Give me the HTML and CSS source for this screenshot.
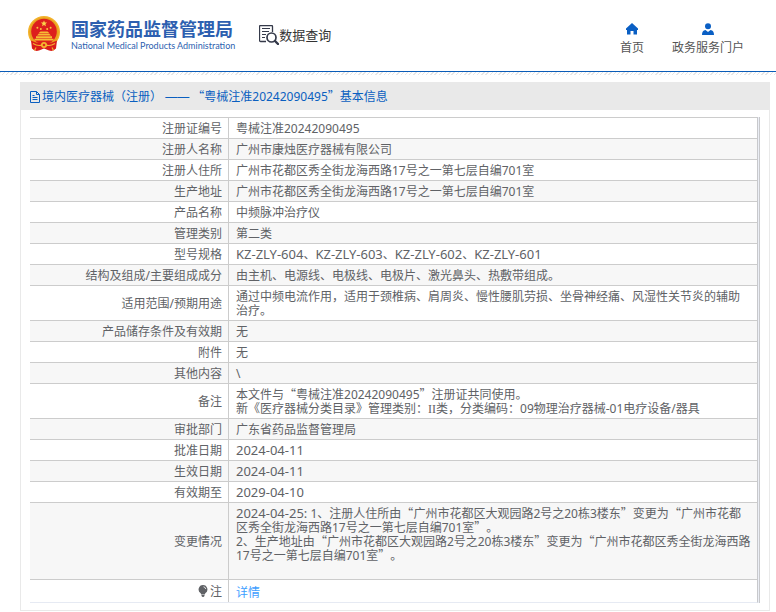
FILE: index.html
```html
<!DOCTYPE html>
<html lang="zh-CN">
<head>
<meta charset="utf-8">
<title>国家药品监督管理局 数据查询</title>
<link rel="stylesheet" href="styles.css">
</head>
<body>
<header class="top">
  <a class="brand" href="#">
    <svg class="emblem" viewBox="0 0 32 36" aria-hidden="true">
      <circle cx="16" cy="16" r="16" fill="#f3b32c"/>
      <circle cx="16" cy="16" r="14.6" fill="#e9a21f"/>
      <circle cx="16" cy="15.5" r="12.8" fill="#dd1f1d"/>
      <path d="M16 4.400l.9 2 2.200.2-1.700 1.400.5 2.200-1.900-1.200-1.900 1.200.5-2.200-1.700-1.400 2.200-.2z" fill="#fbd34a"/>
      <g fill="#f8c53e"><circle cx="9.400" cy="11.800" r="1"/><circle cx="12.800" cy="13" r="1"/><circle cx="19.200" cy="13" r="1"/><circle cx="22.600" cy="11.800" r="1"/></g>
      <path d="M10.500 17.200l2-1.700h7l2 1.700zM9 19.600l1.800-1.800h10.400l1.800 1.800zM8 20.200h16v2H8zM6.500 22.800h19v1.800h-19z" fill="#f6bd35"/>
      <path d="M3 24.500q5 2.500 10 2.500q3-1.500 6 0q5 0 10-2.500l-1 8q-3 3.500-7 2l-5-2-5 2q-4 1.500-7-2z" fill="#d91c1b"/>
      <path d="M5 27.500q5 3 9 1.500M27 27.500q-5 3-9 1.500M8 31.500l-1.500 3M24 31.500l1.500 3" fill="none" stroke="#f4b431" stroke-width="1.200"/>
      <circle cx="16" cy="29" r="3" fill="#f5b92f"/><circle cx="16" cy="29" r="1.300" fill="#dd2a1d"/>
    </svg>
    <span class="names"><strong class="name">国家药品监督管理局</strong><span class="english">National Medical Products Administration</span></span>
  </a>
  <a class="query" href="#">
    <svg class="query-icon" viewBox="0 0 20 20" fill="none" stroke="#353a4a" aria-hidden="true">
      <path d="M7 16.500H1.500a1 1 0 0 1-1-1V1.500a1 1 0 0 1 1-1h11a1 1 0 0 1 1 1V7" stroke-width="1.300"/>
      <path d="M3 3.500h8M3 6.500h7M3 9.500h4M3 12.500h3" stroke-width="1.200"/>
      <circle cx="12.500" cy="12.500" r="4.500" stroke-width="1.700"/>
      <path d="M16 16l3 3" stroke-width="2.400" stroke-linecap="round"/>
    </svg>
    <span>数据查询</span>
  </a>
  <nav class="nav">
    <a href="#"><svg viewBox="0 0 12 12" aria-hidden="true"><path d="M6 0L0 5.500V7h1v4.500h3.500V8h3v3.500H11V7h1V5.500z"/></svg><span>首页</span></a>
    <a href="#"><svg viewBox="0 0 12 12" aria-hidden="true"><circle cx="6" cy="3.200" r="3"/><path d="M0 12c0-3 1-4.700 3.500-5L6 9l2.500-2C11 7.300 12 9 12 12z"/></svg><span>政务服务门户</span></a>
  </nav>
</header>
<div class="hatch"></div>
<main class="panel">
  <h1 class="title"><svg class="doc" viewBox="0 0 10 12" fill="none" stroke="currentColor" aria-hidden="true"><path d="M.5 .5h6l3 3v8h-9zM6.500 .5v3h3M2.500 4.500h2M2.500 6.500h5M2.500 8.500h5"/></svg>境内医疗器械（注册） <span class="dash">——</span> <span class="wide">“</span>粤械注准20242090495<span class="wide">”</span>基本信息</h1>
  <div class="frame">
  <table class="record">
    <tbody>
    <tr><th scope="row">注册证编号</th><td>粤械注准20242090495</td></tr>
    <tr><th scope="row">注册人名称</th><td>广州市康烛医疗器械有限公司</td></tr>
    <tr><th scope="row">注册人住所</th><td>广州市花都区秀全街龙海西路17号之一第七层自编701室</td></tr>
    <tr><th scope="row">生产地址</th><td>广州市花都区秀全街龙海西路17号之一第七层自编701室</td></tr>
    <tr><th scope="row">产品名称</th><td>中频脉冲治疗仪</td></tr>
    <tr><th scope="row">管理类别</th><td>第二类</td></tr>
    <tr><th scope="row">型号规格</th><td><span class="code">KZ-ZLY-604</span>、<span class="code">KZ-ZLY-603</span>、<span class="code">KZ-ZLY-602</span>、<span class="code">KZ-ZLY-601</span></td></tr>
    <tr><th scope="row">结构及组成/主要组成成分</th><td>由主机、电源线、电极线、电极片、激光鼻头、热敷带组成。</td></tr>
    <tr><th scope="row">适用范围/预期用途</th><td>通过中频电流作用，适用于颈椎病、肩周炎、慢性腰肌劳损、坐骨神经痛、风湿性关节炎的辅助治疗。</td></tr>
    <tr><th scope="row">产品储存条件及有效期</th><td>无</td></tr>
    <tr><th scope="row">附件</th><td>无</td></tr>
    <tr><th scope="row">其他内容</th><td>\</td></tr>
    <tr><th scope="row">备注</th><td>本文件与<span class="wide">“</span>粤械注准20242090495<span class="wide">”</span>注册证共同使用。<br>新《医疗器械分类目录》管理类别：<span class="roman">II</span>类，分类编码：09物理治疗器械-01电疗设备/器具</td></tr>
    <tr><th scope="row">审批部门</th><td>广东省药品监督管理局</td></tr>
    <tr><th scope="row">批准日期</th><td><span class="code">2024-04-11</span></td></tr>
    <tr><th scope="row">生效日期</th><td><span class="code">2024-04-11</span></td></tr>
    <tr><th scope="row">有效期至</th><td><span class="code">2029-04-10</span></td></tr>
    <tr><th scope="row">变更情况</th><td><span class="code">2024-04-25:</span> 1、注册人住所由<span class="wide">“</span>广州市花都区大观园路2号之20栋3楼东<span class="wide">”</span>变更为<span class="wide">“</span>广州市花都区秀全街龙海西路17号之一第七层自编701室<span class="wide">”</span>。<br>2、生产地址由<span class="wide">“</span>广州市花都区大观园路2号之20栋3楼东<span class="wide">”</span>变更为<span class="wide">“</span>广州市花都区秀全街龙海西路17号之一第七层自编701室<span class="wide">”</span>。<br><br></td></tr>
    <tr class="note"><th scope="row"><svg class="bulb" viewBox="0 0 10 12" aria-hidden="true"><path d="M5 0a4.500 4.500 0 0 1 2.300 8.300L6.800 9.500H3.200L2.700 8.300A4.500 4.500 0 0 1 5 0zM3.500 10h3v1l-1 1h-1l-1-1z" fill="#606266"/><path d="M5.500 1.800q2 .3 2.200 2.200" fill="none" stroke="#fff" stroke-width=".8"/></svg>注</th><td><a href="#">详情</a></td></tr>
    </tbody>
  </table>
  </div>
</main>
</body>
</html>
```
FILE: styles.css
```css
* { box-sizing: border-box; }

body {
  margin: 0;
  background: #fff;
  color: #606266;
  font: 12px/14px "Noto Sans", "Noto Sans CJK SC", sans-serif;
  text-spacing-trim: space-all;
}

a { color: inherit; text-decoration: none; }

.wide { font-family: "Noto Sans CJK SC", sans-serif; line-height: 1px; }
.dash { font-family: "Liberation Sans", sans-serif; line-height: 1px; }
.roman { font-family: "Liberation Serif", serif; line-height: 1px; }
.code { font-size: 13px; line-height: 1px; }

.top {
  display: flex;
  align-items: center;
  height: 72px;
  padding: 0 32px 4px 28px;
  border-bottom: 1px solid #0a5cb8;
}

.hatch {
  height: 3px;
  background: repeating-linear-gradient(135deg, #e6e6e6 0 1px, #fff 1px 3px);
}

.brand { display: flex; align-items: center; gap: 11px; }
.emblem { width: 32px; height: 36px; }
.names { display: flex; flex-direction: column; color: #2d5fb0; white-space: nowrap; }
.name { font: bold 18px/24px "Noto Sans CJK SC", sans-serif; }
.english { font: 400 9px/12px Lato, sans-serif; }

.query {
  display: flex;
  align-items: center;
  margin-left: 24px;
  padding-top: 2px;
  color: #333;
  font-size: 13px;
  line-height: 18px;
}
.query-icon { width: 20px; height: 20px; }

.nav { display: flex; gap: 28px; margin-left: auto; padding-top: 10px; }
.nav a {
  display: flex;
  flex-direction: column;
  align-items: center;
  gap: 6px;
  color: #555;
}
.nav svg { width: 12px; height: 12px; fill: #0a5fc4; }

.panel {
  margin: 7px 6px 0 20px;
  border: 1px solid #e9e9e9;
}

.title {
  display: flow-root;
  margin: 0;
  padding: 7px 9px 6px;
  background: #e9e9e9;
  color: #0a5fc0;
  font-size: 12px;
  font-weight: normal;
  line-height: 14px;
}
.doc { width: 10px; height: 12px; margin-right: 2px; vertical-align: -2px; }

.frame {
  margin: 7px 9px;
  padding-right: 1px;
  border-right: 1px solid #c8c9cc;
  background: #ebeef5;
}

.record {
  width: 100%;
  border-collapse: separate;
  border-spacing: 0;
  border-right: 1px solid #c8c9cc;
  border-bottom: 1px solid #e6eaf3;
  background: #fff;
}
.record tr:nth-child(even) { background: #f7f7f7; }
.record th,
.record td {
  padding: 4px 6px 2px;
  border-top: 1px solid #ccc;
  vertical-align: middle;
}
.record th {
  width: 199px;
  border-right: 1px solid #ccc;
  font-weight: normal;
  text-align: right;
}
.record td { padding-left: 7px; text-align: left; }
.record .note td { padding-top: 6px; }
.note a { color: #409eff; }
.bulb { width: 10px; height: 12px; margin-right: 2px; vertical-align: -1px; }
```
